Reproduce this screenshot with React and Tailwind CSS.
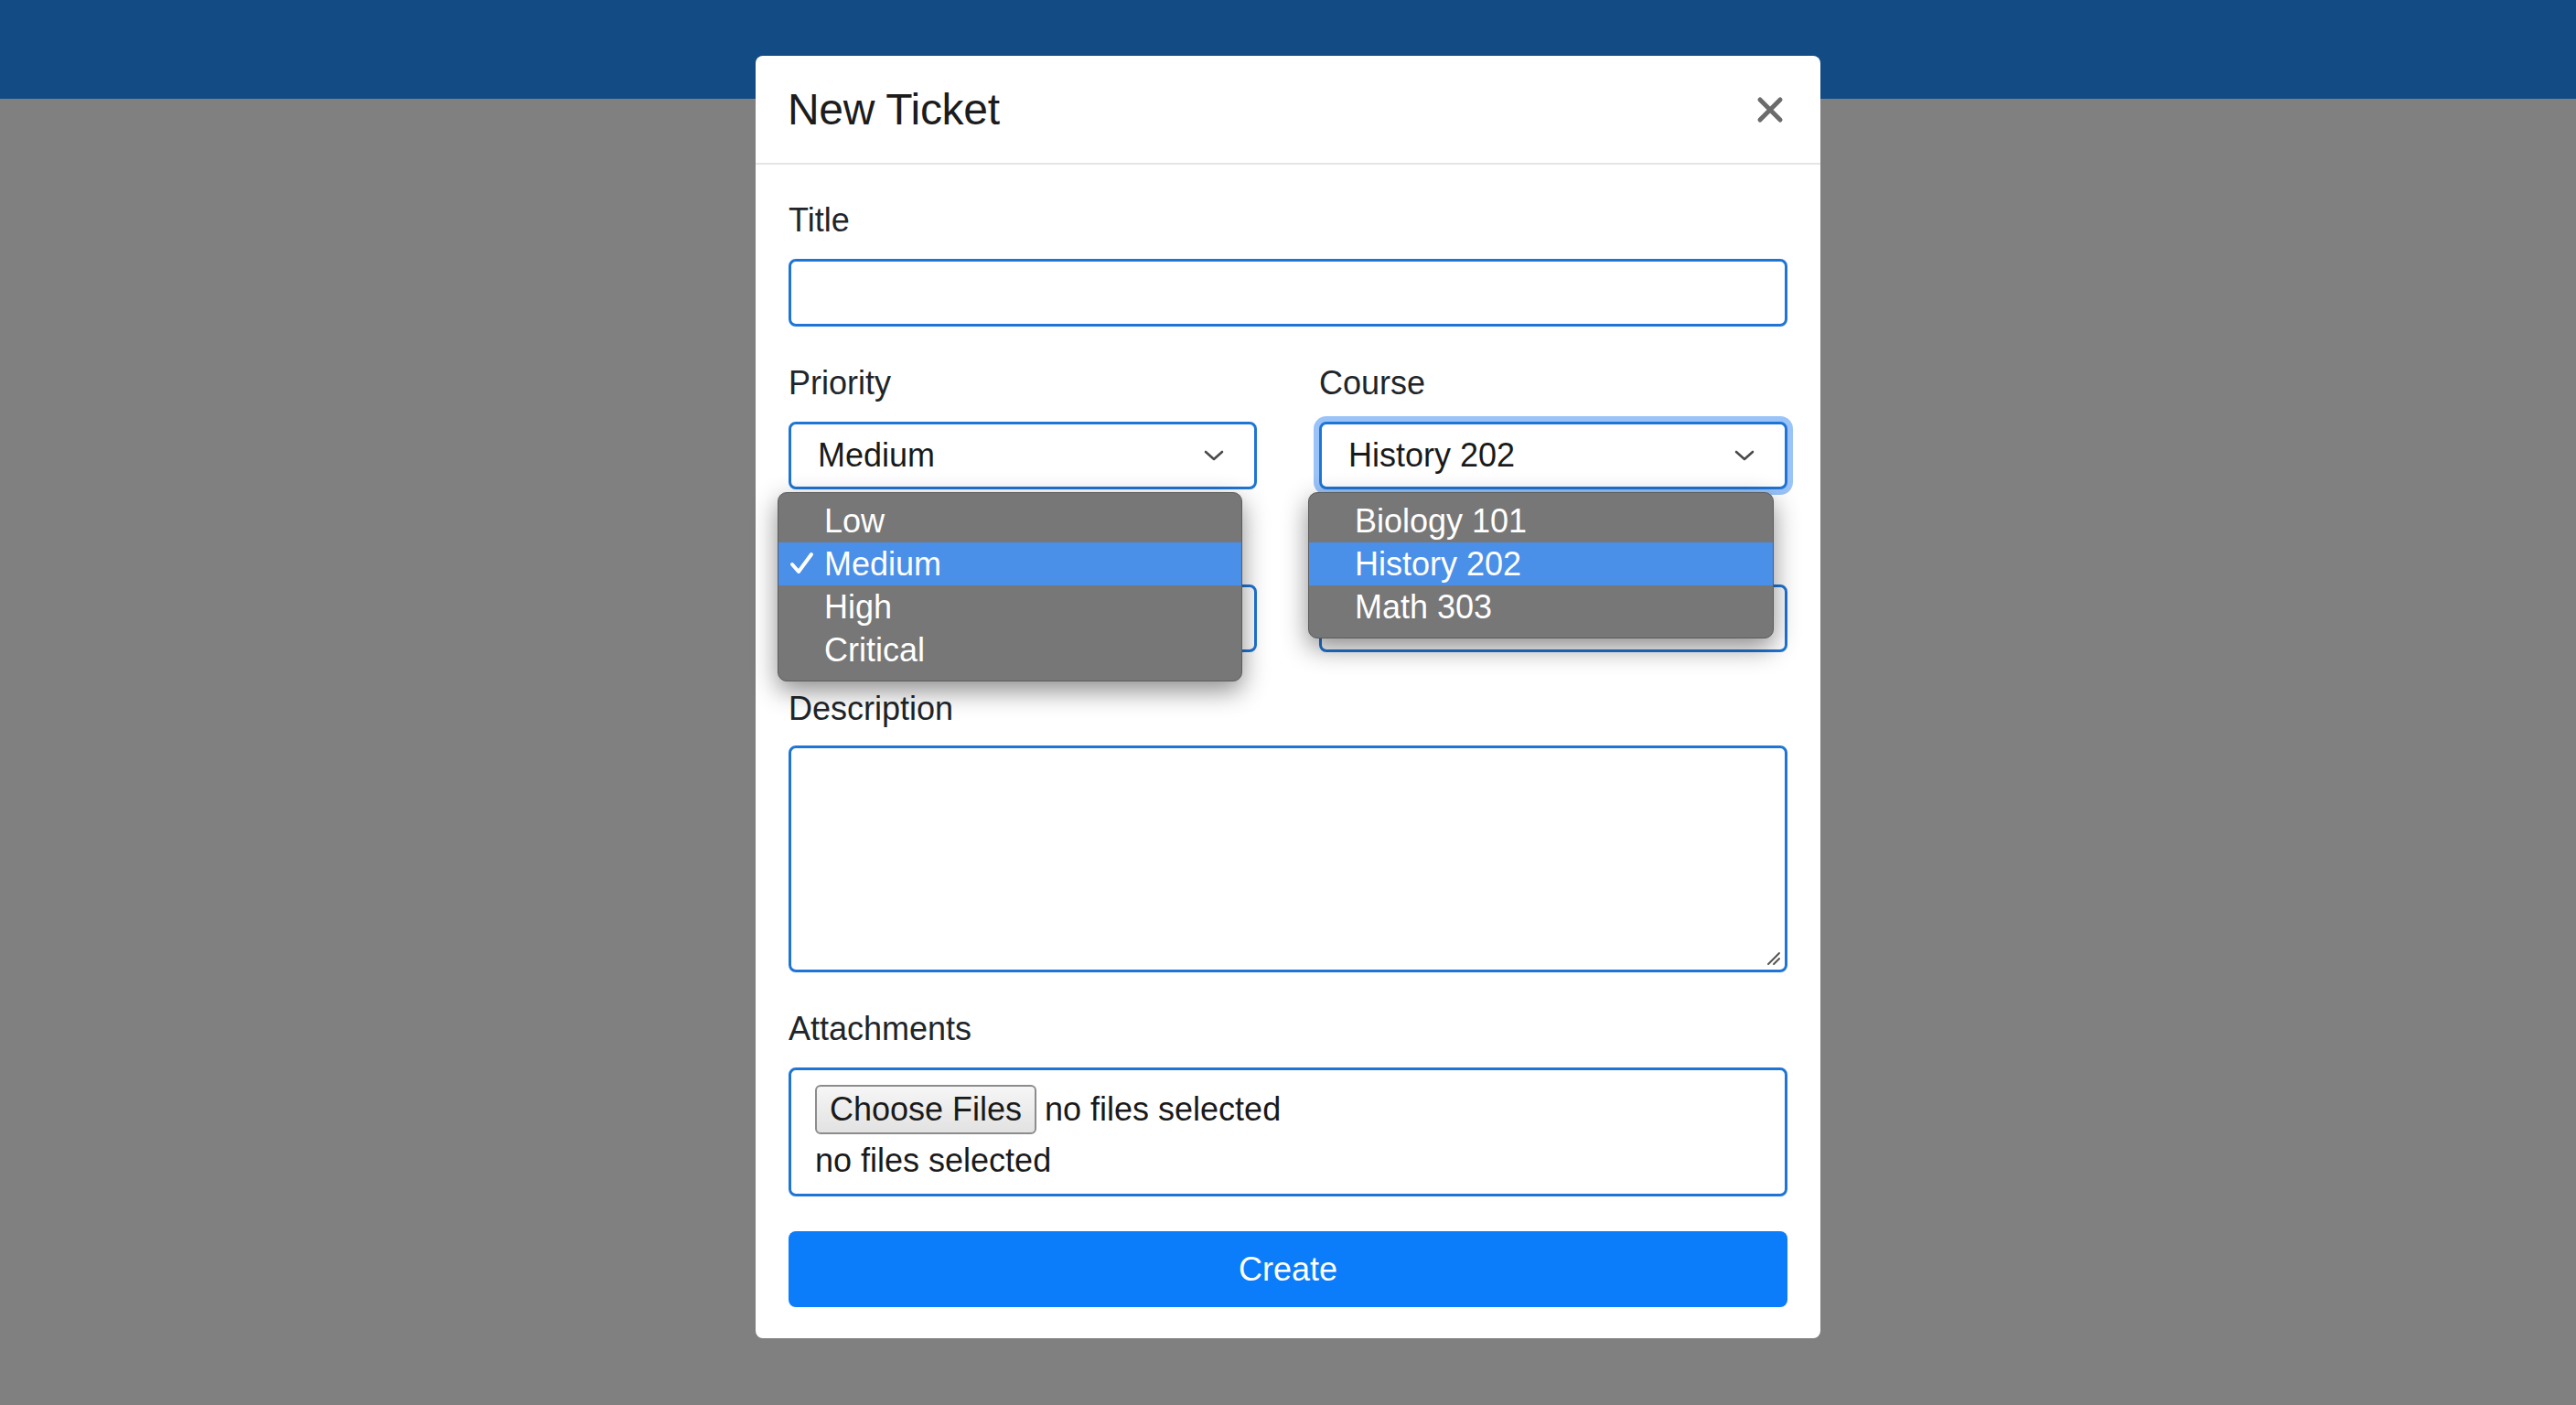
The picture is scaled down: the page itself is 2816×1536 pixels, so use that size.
import React from "react";

function Chevron() {
  return (
    <svg width="24" height="16" viewBox="0 0 24 16" fill="none">
      <path d="M3 4 L12 12 L21 4" stroke="#4a4a4a" strokeWidth="2.6" strokeLinecap="round" strokeLinejoin="round" />
    </svg>
  );
}

function Check() {
  return (
    <svg width="28" height="28" viewBox="0 0 28 28" fill="none">
      <path d="M3 15 L10 23 L24 4" stroke="#ffffff" strokeWidth="4" strokeLinecap="round" strokeLinejoin="round" />
    </svg>
  );
}

function Label({ children }) {
  return <div className="h-[54px] leading-[56px] text-[36px] text-[#212529]">{children}</div>;
}

function Menu({ items, selected, showCheck, className }) {
  return (
    <div className={"absolute top-[calc(100%+3px)] z-10 rounded-[10px] border border-[#5c5c5c] bg-[#777777] pt-[7px] pb-[10px] shadow-[0_10px_28px_rgba(0,0,0,0.45)] " + className}>
      {items.map((it) => (
        <div
          key={it}
          className={
            "relative flex h-[47px] items-center pl-[50px] text-[36px] text-white " +
            (it === selected ? "bg-[#4a8fe8]" : "")
          }
        >
          {showCheck && it === selected ? (
            <span className="absolute left-[12px] top-[9px]">
              <Check />
            </span>
          ) : null}
          {it}
        </div>
      ))}
    </div>
  );
}

export default function App() {
  return (
    <div className="relative h-[1536px] w-full overflow-hidden bg-[#808080]" style={{ fontFamily: '"Liberation Sans", Arial, sans-serif' }}>
      <div className="h-[108px] bg-[#134b85]" />

      <div className="absolute inset-x-0 top-[61px] mx-auto w-[1164px] rounded-[8px] bg-white">
        {/* header */}
        <div className="flex h-[119px] items-center justify-between border-b-2 border-[#e3e5e8] pl-[35px] pr-[40px]">
          <div className="text-[48px] font-medium tracking-[-0.3px] text-[#1c1c1c]">New Ticket</div>
          <svg width="30" height="30" viewBox="0 0 30 30" fill="none">
            <path d="M4 4 L26 26 M26 4 L4 26" stroke="#6b6b6b" strokeWidth="5" strokeLinecap="round" />
          </svg>
        </div>

        {/* body */}
        <div className="flex flex-col gap-[34px] px-[36px] pt-[33px] pb-[34px]">
          <div className="flex flex-col gap-[16px]">
            <Label>Title</Label>
            <div className="h-[74px] rounded-[8px] border-[3px] border-[#1f75d6] bg-white" />
          </div>

          <div className="grid grid-cols-2 gap-x-[68px]">
            <div className="flex flex-col gap-[16px]">
              <Label>Priority</Label>
              <div className="relative">
                <div className="flex h-[74px] items-center justify-between rounded-[8px] border-[3px] border-[#1f75d6] bg-white pl-[29px] pr-[32px] text-[36px] text-[#1a1a1a]">
                  <span>Medium</span>
                  <Chevron />
                </div>
                <Menu items={["Low", "Medium", "High", "Critical"]} selected="Medium" showCheck className="left-[-12px] w-[508px]" />
              </div>
            </div>
            <div className="flex flex-col gap-[16px]">
              <Label>Course</Label>
              <div className="relative">
                <div className="flex h-[74px] items-center justify-between rounded-[8px] border-[3px] border-[#1f75d6] bg-white pl-[29px] pr-[32px] text-[36px] text-[#1a1a1a] shadow-[0_0_0_6px_rgba(120,175,245,0.75)]">
                  <span>History 202</span>
                  <Chevron />
                </div>
                <Menu items={["Biology 101", "History 202", "Math 303"]} selected="History 202" className="left-[-12px] w-[509px]" />
              </div>
            </div>
          </div>

          <div className="grid grid-cols-2 gap-x-[68px]">
            <div className="flex flex-col gap-[16px]">
              <div className="h-[54px]" />
              <div className="h-[74px] rounded-[8px] border-[3px] border-[#1f75d6] bg-white" />
            </div>
            <div className="flex flex-col gap-[16px]">
              <div className="h-[54px]" />
              <div className="h-[74px] rounded-[8px] border-[3px] border-[#1f75d6] bg-white" />
            </div>
          </div>

          <div className="flex flex-col gap-[14px]">
            <Label>Description</Label>
            <div className="flex h-[248px] items-end justify-end rounded-[8px] border-[3px] border-[#1f75d6] bg-white p-[4px]">
              <svg width="18" height="18" viewBox="0 0 18 18" fill="none">
                <path d="M4 16 L16 4 M10 16 L16 10" stroke="#555555" strokeWidth="2" strokeLinecap="round" />
              </svg>
            </div>
          </div>

          <div className="flex flex-col gap-[16px]">
            <Label>Attachments</Label>
            <div className="flex h-[141px] flex-col rounded-[8px] border-[3px] border-[#1f75d6] bg-white pl-[26px] pt-[16px]">
              <div className="flex h-[54px] items-center gap-[9px] text-[36px] text-[#1a1a1a]">
                <div className="flex h-[54px] w-[242px] items-center justify-center rounded-[6px] border-2 border-[#8c8c8c] bg-gradient-to-b from-[#f6f6f6] to-[#e2e2e2] text-[36px] text-[#1a1a1a]">
                  Choose Files
                </div>
                <span>no files selected</span>
              </div>
              <div className="h-[56px] leading-[58px] text-[36px] text-[#1a1a1a]">no files selected</div>
            </div>
          </div>

          <div className="mt-[4px] flex h-[83px] items-center justify-center rounded-[8px] bg-[#0b7dfb] text-[36px] text-white">
            Create
          </div>
        </div>
      </div>
    </div>
  );
}
